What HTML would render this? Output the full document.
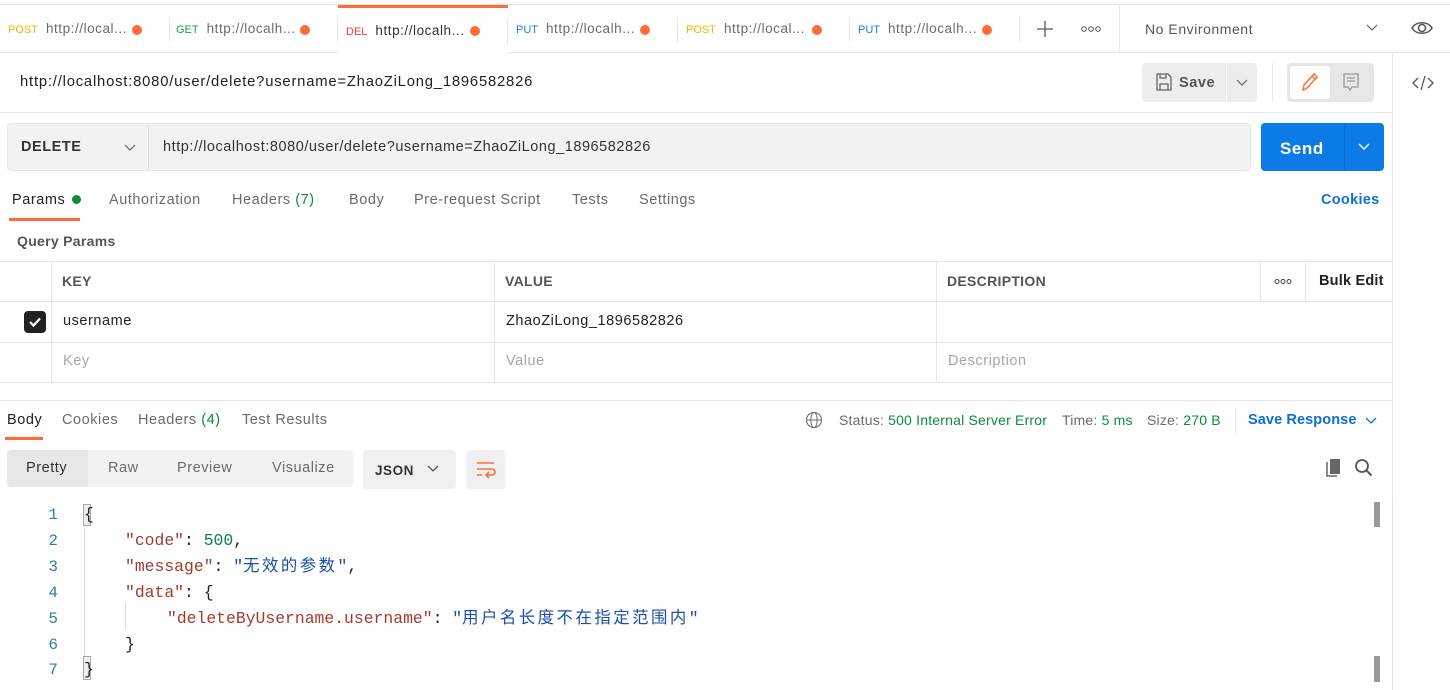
<!DOCTYPE html>
<html><head><meta charset="utf-8"><style>
*{box-sizing:border-box;margin:0;padding:0}
body{width:1450px;height:690px;position:relative;overflow:hidden;background:#fff;font-family:"Liberation Sans","Noto Sans CJK SC",sans-serif;font-size:14px;color:#212121;letter-spacing:0.55px}
.a{position:absolute;white-space:nowrap;line-height:17px}
.tab{position:absolute;top:5px;height:48px;width:170px;border-bottom:1px solid #e6e6e6;font-size:13.5px;color:#6b6b6b;line-height:48px;padding-left:8px}
.tab .m{font-size:11px;margin-right:8px;letter-spacing:0}
.tab .d{position:absolute;right:28px;top:20px;width:10px;height:10px;border-radius:50%;background:#ff6c37}
.tab:after{content:"";position:absolute;right:0;top:12px;height:25px;border-right:1px solid #e6e6e6}
.gray{color:#6b6b6b}
.code{font-family:"Liberation Mono","Noto Sans CJK SC",monospace;font-size:16.4px;line-height:20px;letter-spacing:0}
.cj{letter-spacing:2.5px}
.ln{position:absolute;left:30px;width:28px;text-align:right;color:#2b7ea8;font-family:"Liberation Mono",monospace;font-size:16px;line-height:20px;letter-spacing:0}
.k{color:#a33b2f}.s{color:#1b4ea8}.n{color:#0d7d5d}
</style></head><body>
<div class="a" style="left:0;top:4px;width:1450px;border-top:1px solid #e6e6e6"></div>
<div class="tab" style="left:0"><span class="m" style="color:#f0b400">POST</span>http://local...<span class="d"></span></div>
<div class="tab" style="left:168px"><span class="m" style="color:#14a550">GET</span>http://localh...<span class="d"></span></div>
<div class="tab" style="left:338px;border-top:3px solid #ff6c37;border-bottom:none;background:#fff;color:#333;line-height:45px"><span class="m" style="color:#e03e3e">DEL</span>http://localh...<span class="d" style="top:18px"></span></div>
<div class="tab" style="left:508px"><span class="m" style="color:#1e7ee6">PUT</span>http://localh...<span class="d"></span></div>
<div class="tab" style="left:678px;width:172px"><span class="m" style="color:#f0b400">POST</span>http://local...<span class="d"></span></div>
<div class="tab" style="left:850px;width:170px"><span class="m" style="color:#1e7ee6">PUT</span>http://localh...<span class="d"></span></div>
<div class="a" style="left:1020px;top:5px;width:100px;height:48px;border-bottom:1px solid #e6e6e6"></div>
<svg class="a" style="left:1037px;top:21px" width="16" height="16"><path d="M8 0v16M0 8h16" stroke="#555" stroke-width="1.3"/></svg>
<svg class="a" style="left:1081px;top:25px" width="20" height="8"><circle cx="3" cy="4" r="2.3" fill="none" stroke="#555"/><circle cx="10" cy="4" r="2.3" fill="none" stroke="#555"/><circle cx="17" cy="4" r="2.3" fill="none" stroke="#555"/></svg>
<div class="a" style="left:1119px;top:5px;width:331px;height:48px;border-left:1px solid #e6e6e6;border-bottom:1px solid #e6e6e6"></div>
<div class="a" style="left:1145px;top:21px;color:#555">No Environment</div>
<svg class="a" style="left:1366px;top:24px" width="12" height="8"><path d="M1 1l5 5 5-5" fill="none" stroke="#666" stroke-width="1.2"/></svg>
<svg class="a" style="left:1411px;top:19px" width="22" height="18"><path d="M1 9C5 2 17 2 21 9C17 16 5 16 1 9Z" fill="none" stroke="#555" stroke-width="1.5"/><circle cx="11" cy="9" r="3.5" fill="none" stroke="#555" stroke-width="1.5"/></svg>
<div class="a" style="left:1392px;top:53px;height:637px;border-left:1px solid #e6e6e6"></div>
<svg class="a" style="left:1412px;top:74px" width="22" height="18"><path d="M6 4L1 9l5 5 M16 4l5 5-5 5 M13 2L9 16" fill="none" stroke="#555" stroke-width="1.3"/></svg>

<div class="a" style="left:20px;top:74px;font-size:14.8px;color:#212121;letter-spacing:0.8px">http://localhost:8080/user/delete?username=ZhaoZiLong_1896582826</div>
<div class="a" style="left:1142px;top:63px;width:84px;height:39px;background:#ededed;border-radius:4px 0 0 4px"></div>
<svg class="a" style="left:1155px;top:72px" width="18" height="20"><path d="M2 2h11l3 3v13H2z M5 18v-6h8v6 M5 2v4h6V2" fill="none" stroke="#666" stroke-width="1.3"/></svg>
<div class="a" style="left:1179px;top:75px;font-weight:bold;color:#555;font-size:14.5px">Save</div>
<div class="a" style="left:1227px;top:63px;width:30px;height:39px;background:#ededed;border-radius:0 4px 4px 0"></div>
<svg class="a" style="left:1236px;top:79px" width="12" height="8"><path d="M1 1l5 5 5-5" fill="none" stroke="#666" stroke-width="1.2"/></svg>
<div class="a" style="left:1272px;top:63px;height:39px;border-left:1px solid #e6e6e6"></div>
<div class="a" style="left:1287px;top:63px;width:87px;height:39px;background:#e6e6e6;border-radius:4px"></div>
<div class="a" style="left:1290px;top:66px;width:40px;height:33px;background:#fff;border-radius:3px"></div>
<svg class="a" style="left:1300px;top:71px" width="20" height="22"><path d="M3 19l1-5L14 3l3 3L7 17z M12 5l3 3" fill="none" stroke="#ff6c37" stroke-width="1.5"/></svg>
<svg class="a" style="left:1342px;top:72px" width="18" height="20"><path d="M2 2h14v13H10l-2 3-2-3H2z M5 6h8 M5 9h8" fill="none" stroke="#999" stroke-width="1.3"/></svg>
<div class="a" style="left:0;top:112px;width:1392px;border-top:1px solid #e6e6e6"></div>

<div class="a" style="left:7px;top:123px;width:1244px;height:48px;background:#f2f2f2;border:1px solid #e6e6e6;border-radius:4px"></div>
<div class="a" style="left:148px;top:124px;height:46px;border-left:1px solid #e3e3e3"></div>
<div class="a" style="left:21px;top:139px;font-weight:bold;font-size:14.5px;color:#333">DELETE</div>
<svg class="a" style="left:124px;top:144px" width="12" height="8"><path d="M1 1l5 5 5-5" fill="none" stroke="#666" stroke-width="1.2"/></svg>
<div class="a" style="left:163px;top:139px;color:#333;font-size:14.5px">http://localhost:8080/user/delete?username=ZhaoZiLong_1896582826</div>
<div class="a" style="left:1261px;top:123px;width:123px;height:48px;background:#0d7be6;border-radius:4px"></div>
<div class="a" style="left:1344px;top:123px;height:48px;border-left:1px solid #0a6ccc"></div>
<div class="a" style="left:1280px;top:139px;color:#fff;font-weight:bold;font-size:17px;line-height:19px">Send</div>
<svg class="a" style="left:1358px;top:143px" width="12" height="8"><path d="M1 1l5 5 5-5" fill="none" stroke="#fff" stroke-width="1.4"/></svg>

<div class="a" style="left:12px;top:192px;color:#212121;font-size:14.5px">Params <span style="display:inline-block;width:9px;height:9px;border-radius:50%;background:#0f8a3c;margin-left:2px"></span></div>
<div class="a" style="left:9px;top:218px;width:71px;height:3px;background:#ff6c37"></div>
<div class="a gray" style="left:109px;top:192px;font-size:14.5px">Authorization</div>
<div class="a gray" style="left:232px;top:192px;font-size:14.5px">Headers <span style="color:#0f8a3c">(7)</span></div>
<div class="a gray" style="left:349px;top:192px;font-size:14.5px">Body</div>
<div class="a gray" style="left:414px;top:192px;font-size:14.5px">Pre-request Script</div>
<div class="a gray" style="left:572px;top:192px;font-size:14.5px">Tests</div>
<div class="a gray" style="left:639px;top:192px;font-size:14.5px">Settings</div>
<div class="a" style="left:1321px;top:192px;color:#0d6fd6;font-weight:bold;font-size:14.5px;letter-spacing:0.3px">Cookies</div>
<div class="a" style="left:17px;top:233px;color:#555;font-weight:bold;font-size:14px;letter-spacing:0.3px">Query Params</div>

<div class="a" style="left:0;top:261px;width:1392px;border-top:1px solid #e6e6e6"></div>
<div class="a" style="left:0;top:301px;width:1392px;border-top:1px solid #e6e6e6"></div>
<div class="a" style="left:0;top:342px;width:1392px;border-top:1px solid #e6e6e6"></div>
<div class="a" style="left:0;top:382px;width:1392px;border-top:1px solid #e6e6e6"></div>
<div class="a" style="left:51px;top:261px;height:121px;border-left:1px solid #e6e6e6"></div>
<div class="a" style="left:494px;top:261px;height:121px;border-left:1px solid #e6e6e6"></div>
<div class="a" style="left:936px;top:261px;height:121px;border-left:1px solid #e6e6e6"></div>
<div class="a" style="left:1260px;top:261px;height:40px;border-left:1px solid #e6e6e6"></div>
<div class="a" style="left:1305px;top:261px;height:40px;border-left:1px solid #e6e6e6"></div>
<div class="a" style="left:62px;top:273px;color:#555;font-weight:bold;letter-spacing:0.3px">KEY</div>
<div class="a" style="left:505px;top:273px;color:#555;font-weight:bold;letter-spacing:0.3px">VALUE</div>
<div class="a" style="left:947px;top:273px;color:#555;font-weight:bold;letter-spacing:0.3px">DESCRIPTION</div>
<svg class="a" style="left:1274px;top:278px" width="18" height="7"><circle cx="3" cy="3.5" r="2" fill="none" stroke="#444"/><circle cx="9" cy="3.5" r="2" fill="none" stroke="#444"/><circle cx="15" cy="3.5" r="2" fill="none" stroke="#444"/></svg>
<div class="a" style="left:1319px;top:273px;color:#212121;font-weight:bold;font-size:14.5px;letter-spacing:0.2px">Bulk Edit</div>
<div class="a" style="left:24px;top:311px;width:22px;height:22px;background:#222;border-radius:4px"></div>
<svg class="a" style="left:27px;top:314px" width="16" height="16"><path d="M3 8l3.5 3.5L13 4.5" fill="none" stroke="#fff" stroke-width="2.2"/></svg>
<div class="a" style="left:63px;top:313px;font-size:14.5px">username</div>
<div class="a" style="left:506px;top:313px;font-size:14.5px">ZhaoZiLong_1896582826</div>
<div class="a" style="left:63px;top:353px;color:#a6a6a6;font-size:14.5px">Key</div>
<div class="a" style="left:506px;top:353px;color:#a6a6a6;font-size:14.5px">Value</div>
<div class="a" style="left:948px;top:353px;color:#a6a6a6;font-size:14.5px">Description</div>

<div class="a" style="left:0;top:400px;width:1392px;border-top:1px solid #e6e6e6"></div>
<div class="a" style="left:7px;top:412px;font-size:14.5px">Body</div>
<div class="a" style="left:5px;top:437px;width:38px;height:3px;background:#ff6c37"></div>
<div class="a gray" style="left:62px;top:412px;font-size:14.5px">Cookies</div>
<div class="a gray" style="left:138px;top:412px;font-size:14.5px">Headers <span style="color:#0f8a3c">(4)</span></div>
<div class="a gray" style="left:242px;top:412px;font-size:14.5px">Test Results</div>
<svg class="a" style="left:805px;top:411px" width="18" height="18"><circle cx="9" cy="9" r="7.5" fill="none" stroke="#777" stroke-width="1.2"/><ellipse cx="9" cy="9" rx="3.2" ry="7.5" fill="none" stroke="#777" stroke-width="1.1"/><path d="M1.5 9h15" stroke="#777" stroke-width="1.1"/></svg>
<div class="a gray" style="left:839px;top:412px;font-size:14px;letter-spacing:0.2px">Status: <span style="color:#0f8a3c">500 Internal Server Error</span></div>
<div class="a gray" style="left:1062px;top:412px;font-size:14px;letter-spacing:0.2px">Time: <span style="color:#0f8a3c">5 ms</span></div>
<div class="a gray" style="left:1147px;top:412px;font-size:14px;letter-spacing:0.2px">Size: <span style="color:#0f8a3c">270 B</span></div>
<div class="a" style="left:1235px;top:408px;height:25px;border-left:1px solid #e6e6e6"></div>
<div class="a" style="left:1248px;top:412px;color:#0d6fd6;font-weight:bold;font-size:14.5px;letter-spacing:0.1px">Save Response</div>
<svg class="a" style="left:1365px;top:417px" width="12" height="8"><path d="M1 1l5 5 5-5" fill="none" stroke="#0d6fd6" stroke-width="1.3"/></svg>

<div class="a" style="left:7px;top:450px;width:346px;height:37px;background:#f2f2f2;border-radius:4px"></div>
<div class="a" style="left:7px;top:450px;width:81px;height:37px;background:#e6e6e6;border-radius:4px 0 0 4px"></div>
<div class="a" style="left:26px;top:460px;font-size:14.5px;color:#333">Pretty</div>
<div class="a gray" style="left:108px;top:460px;font-size:14.5px">Raw</div>
<div class="a gray" style="left:177px;top:460px;font-size:14.5px">Preview</div>
<div class="a gray" style="left:272px;top:460px;font-size:14.5px">Visualize</div>
<div class="a" style="left:363px;top:450px;width:93px;height:39px;background:#f0f0f0;border-radius:4px"></div>
<div class="a" style="left:375px;top:462px;font-weight:bold;font-size:13.5px;color:#333">JSON</div>
<svg class="a" style="left:427px;top:465px" width="12" height="8"><path d="M1 1l5 5 5-5" fill="none" stroke="#555" stroke-width="1.3"/></svg>
<div class="a" style="left:466px;top:450px;width:39px;height:39px;background:#f0f0f0;border-radius:4px"></div>
<svg class="a" style="left:475px;top:460px" width="22" height="20"><path d="M2 3h17 M2 9h15a3 3 0 0 1 0 6h-5 M14 12l-3 3 3 3 M2 15h5" fill="none" stroke="#ff6c37" stroke-width="1.6"/></svg>
<svg class="a" style="left:1325px;top:457px" width="18" height="20"><path d="M5 2h10v15H5z" fill="#666"/><path d="M2 5v14h10" fill="none" stroke="#666" stroke-width="1.5"/></svg>
<svg class="a" style="left:1354px;top:458px" width="20" height="20"><circle cx="8" cy="8" r="6" fill="none" stroke="#555" stroke-width="1.8"/><path d="M12.5 12.5l5 5" stroke="#555" stroke-width="2"/></svg>

<div class="a" style="left:1374px;top:502px;width:6px;height:25px;background:#999"></div>
<div class="a" style="left:1374px;top:656px;width:6px;height:26px;background:#999"></div>
<div class="a" style="left:1392px;top:502px;height:188px;border-left:1px solid #e3e3e3"></div>

<div class="ln" style="top:505px">1</div><div class="ln" style="top:531px">2</div><div class="ln" style="top:557px">3</div><div class="ln" style="top:583px">4</div><div class="ln" style="top:609px">5</div><div class="ln" style="top:635px">6</div><div class="ln" style="top:660px">7</div>
<div class="a" style="left:83px;top:504px;width:8px;height:22px;border:1px solid #aaa;background:#eee"></div>
<div class="a" style="left:83px;top:656px;width:8px;height:24px;border:1px solid #aaa;background:#eee"></div>
<div class="a" style="left:84px;top:528px;height:128px;border-left:1px solid #ddd"></div>
<div class="a" style="left:125px;top:604px;height:26px;border-left:1px solid #ddd"></div>
<div class="a code" style="left:84px;top:505px">{</div>
<div class="a code" style="left:125px;top:531px"><span class="k">"code"</span>: <span class="n">500</span>,</div>
<div class="a code" style="left:125px;top:557px"><span class="k">"message"</span>: <span class="s">"<span class="cj">无效的参数</span>"</span>,</div>
<div class="a code" style="left:125px;top:583px"><span class="k">"data"</span>: {</div>
<div class="a code" style="left:167px;top:609px"><span class="k">"deleteByUsername.username"</span>: <span class="s">"<span class="cj">用户名长度不在指定范围内</span>"</span></div>
<div class="a code" style="left:125px;top:635px">}</div>
<div class="a code" style="left:84px;top:660px">}</div>
</body></html>
